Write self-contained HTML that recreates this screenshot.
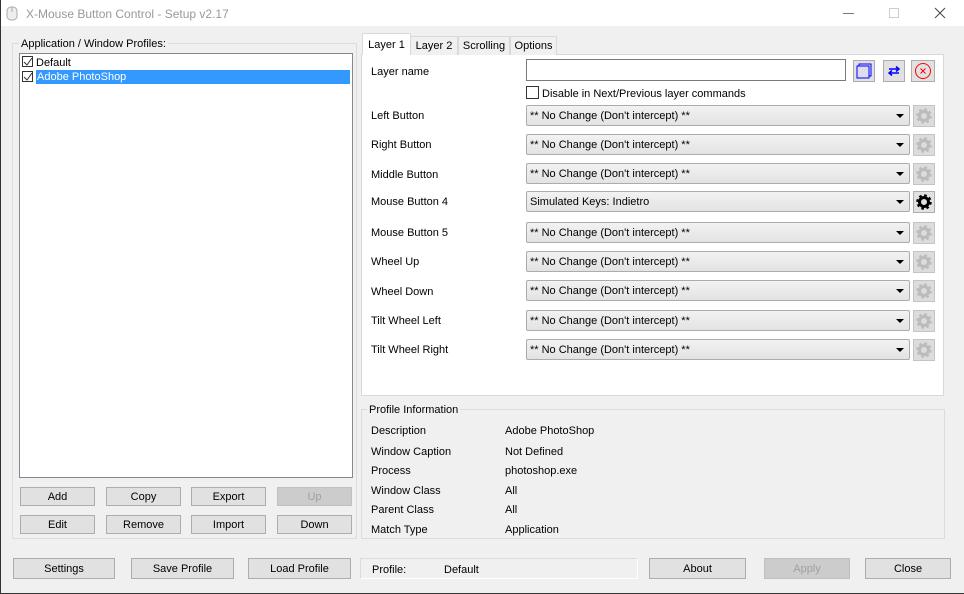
<!DOCTYPE html>
<html><head><meta charset="utf-8"><style>
*{box-sizing:border-box;margin:0;padding:0}
body{width:964px;height:594px;background:#f0f0f0;font-family:"Liberation Sans",sans-serif;font-size:11px;color:#000;position:relative;overflow:hidden}
.a{position:absolute}
.title{left:0;top:0;width:964px;height:26px;background:#fff}
.btn{position:absolute;background:#e1e1e1;border:1px solid #adadad;text-align:center;line-height:18px;font-size:11px}
.dis{background:#cccccc;border-color:#bfbfbf;color:#a0a0a0}
.grp{position:absolute;border:1px solid #dcdcdc}
.lbl{position:absolute;font-size:11px;background:#f0f0f0;padding:0 2px}
.combo{position:absolute;left:526px;width:384px;height:21px;border:1px solid #acacac;border-radius:2px;background:linear-gradient(#f2f2f2,#e3e3e3);padding-left:3px;line-height:20px;font-size:11px}
.combo:after{content:"";position:absolute;right:5px;top:8px;border-left:4px solid transparent;border-right:4px solid transparent;border-top:4px solid #000}
.gear{position:absolute;left:913px;width:22px;height:22px;background:#dcdcdc;border:1px solid #c4c4c4}
.row{position:absolute;left:371px;font-size:11px}
.tab{position:absolute;top:36px;height:19px;border:1px solid #d9d9d9;border-bottom:none;background:#f0f0f0;text-align:center;line-height:19px}
.t{margin-top:1px}
</style></head><body>
<div class="a title"></div>
<div class="a" style="left:0;top:0;width:1px;height:594px;background:#333"></div>
<div class="a" style="left:0;top:593px;width:964px;height:1px;background:#333"></div>
<svg class="a" style="left:6px;top:6px" width="13" height="15"><rect x="1" y="1" width="10" height="13" rx="4" fill="#eee" stroke="#aaa"/><line x1="6" y1="1" x2="6" y2="6" stroke="#aaa"/></svg>
<div class="a" style="left:26px;top:7px;font-size:12px;color:#999">X-Mouse Button Control - Setup v2.17</div>
<div class="a" style="left:843px;top:13px;width:11px;height:1px;background:#777"></div>
<div class="a" style="left:889px;top:8px;width:10px;height:10px;border:1px solid #ccc"></div>
<svg class="a" style="left:934px;top:7px" width="12" height="12"><path d="M1 1L11 11M11 1L1 11" stroke="#444"/></svg>

<div class="grp" style="left:12px;top:43px;width:345px;height:496px"></div>
<div class="lbl" style="left:19px;top:38px">Application / Window Profiles:</div>
<div class="a" style="left:19px;top:53px;width:334px;height:425px;background:#fff;border:1px solid #828790"></div>
<div class="a" style="left:22px;top:56px;width:11px;height:11px;border:1px solid #333;background:#fff"></div>
<svg class="a" style="left:22px;top:56px" width="12" height="12"><path d="M2 6L5 9L10 2" stroke="#333" fill="none"/></svg>
<div class="a" style="left:36px;top:57px">Default</div>
<div class="a" style="left:36px;top:70px;width:314px;height:14px;background:#3399ff"></div>
<div class="a" style="left:22px;top:71px;width:11px;height:11px;border:1px solid #333;background:#fff"></div>
<svg class="a" style="left:22px;top:71px" width="12" height="12"><path d="M2 6L5 9L10 2" stroke="#333" fill="none"/></svg>
<div class="a" style="left:37px;top:71px;color:#fff">Adobe PhotoShop</div>

<div class="btn" style="left:20px;top:487px;width:75px;height:19px">Add</div>
<div class="btn" style="left:106px;top:487px;width:75px;height:19px">Copy</div>
<div class="btn" style="left:191px;top:487px;width:75px;height:19px">Export</div>
<div class="btn dis" style="left:277px;top:487px;width:75px;height:19px">Up</div>
<div class="btn" style="left:20px;top:515px;width:75px;height:19px">Edit</div>
<div class="btn" style="left:106px;top:515px;width:75px;height:19px">Remove</div>
<div class="btn" style="left:191px;top:515px;width:75px;height:19px">Import</div>
<div class="btn" style="left:277px;top:515px;width:75px;height:19px">Down</div>

<div class="a" style="left:361px;top:54px;width:583px;height:342px;background:#fff;border:1px solid #d9d9d9"></div>
<div class="tab" style="left:410px;width:48px">Layer 2</div>
<div class="tab" style="left:458px;width:52px">Scrolling</div>
<div class="tab" style="left:510px;width:47px">Options</div>
<div class="tab" style="left:362px;top:33px;width:49px;height:22px;background:#fff;line-height:22px">Layer 1</div>

<div class="row" style="top:66px">Layer name</div>
<div class="a" style="left:526px;top:59px;width:320px;height:22px;background:#fff;border:1px solid #7a7a7a"></div>
<div class="a" style="left:853px;top:60px;width:22px;height:22px;background:#e1e1e1;border:1px solid #adadad"></div>
<svg class="a" style="left:856px;top:63px" width="16" height="16"><rect x="3" y="1" width="12" height="12" fill="none" stroke="#00f"/><rect x="1" y="3" width="12" height="12" fill="#dde" stroke="#00f"/></svg>
<div class="a" style="left:883px;top:60px;width:22px;height:22px;background:#e1e1e1;border:1px solid #adadad"></div>
<svg class="a" style="left:886px;top:63px" width="16" height="16"><path d="M3 6H13M10 3.5L13 6L10 8.5M13 10H3M6 7.5L3 10L6 12.5" stroke="#00f" stroke-width="1.5" fill="none"/></svg>
<div class="a" style="left:911px;top:60px;width:24px;height:22px;background:#e1e1e1;border:1px solid #adadad"></div>
<svg class="a" style="left:914px;top:62px" width="18" height="18"><circle cx="9" cy="9" r="7.5" fill="none" stroke="#f00"/><path d="M6.5 6.5L11.5 11.5M11.5 6.5L6.5 11.5" stroke="#f00"/></svg>
<div class="a" style="left:526px;top:86px;width:13px;height:13px;border:1px solid #333;background:#fff"></div>
<div class="a" style="left:542px;top:88px">Disable in Next/Previous layer commands</div>

<div class="row" style="top:110px">Left Button</div>
<div class="combo" style="top:105px">** No Change (Don't intercept) **</div><div class="gear" style="top:105px"></div>
<div class="row" style="top:139px">Right Button</div>
<div class="combo" style="top:134px">** No Change (Don't intercept) **</div><div class="gear" style="top:134px"></div>
<div class="row" style="top:169px">Middle Button</div>
<div class="combo" style="top:163px">** No Change (Don't intercept) **</div><div class="gear" style="top:163px"></div>
<div class="row" style="top:196px">Mouse Button 4</div>
<div class="combo" style="top:191px">Simulated Keys: Indietro</div><div class="gear" style="top:191px;background:#e1e1e1;border-color:#adadad"></div>
<div class="row" style="top:227px">Mouse Button 5</div>
<div class="combo" style="top:222px">** No Change (Don't intercept) **</div><div class="gear" style="top:222px"></div>
<div class="row" style="top:256px">Wheel Up</div>
<div class="combo" style="top:251px">** No Change (Don't intercept) **</div><div class="gear" style="top:251px"></div>
<div class="row" style="top:286px">Wheel Down</div>
<div class="combo" style="top:280px">** No Change (Don't intercept) **</div><div class="gear" style="top:280px"></div>
<div class="row" style="top:315px">Tilt Wheel Left</div>
<div class="combo" style="top:310px">** No Change (Don't intercept) **</div><div class="gear" style="top:310px"></div>
<div class="row" style="top:344px">Tilt Wheel Right</div>
<div class="combo" style="top:339px">** No Change (Don't intercept) **</div><div class="gear" style="top:339px"></div>
<svg class="a" style="left:0;top:0" width="964" height="594">
<defs><g id="g"><circle r="4.5" fill="none" stroke-width="3"/><circle r="6.5" fill="none" stroke-width="2.5" stroke-dasharray="2.6 2.5"/></g></defs>
<use href="#g" x="924" y="116" stroke="#bbb"/><use href="#g" x="924" y="145" stroke="#bbb"/><use href="#g" x="924" y="174" stroke="#bbb"/>
<use href="#g" x="924" y="202" stroke="#000"/><use href="#g" x="924" y="233" stroke="#bbb"/><use href="#g" x="924" y="262" stroke="#bbb"/>
<use href="#g" x="924" y="291" stroke="#bbb"/><use href="#g" x="924" y="321" stroke="#bbb"/><use href="#g" x="924" y="350" stroke="#bbb"/>
</svg>

<div class="grp" style="left:361px;top:409px;width:584px;height:130px"></div>
<div class="lbl" style="left:367px;top:404px">Profile Information</div>
<div class="row" style="top:425px">Description</div><div class="a" style="left:505px;top:425px">Adobe PhotoShop</div>
<div class="row" style="top:446px">Window Caption</div><div class="a" style="left:505px;top:446px">Not Defined</div>
<div class="row" style="top:465px">Process</div><div class="a" style="left:505px;top:465px">photoshop.exe</div>
<div class="row" style="top:485px">Window Class</div><div class="a" style="left:505px;top:485px">All</div>
<div class="row" style="top:504px">Parent Class</div><div class="a" style="left:505px;top:504px">All</div>
<div class="row" style="top:524px">Match Type</div><div class="a" style="left:505px;top:524px">Application</div>

<div class="btn" style="left:13px;top:558px;width:102px;height:21px;line-height:21px">Settings</div>
<div class="btn" style="left:131px;top:558px;width:103px;height:21px;line-height:21px">Save Profile</div>
<div class="btn" style="left:248px;top:558px;width:103px;height:21px;line-height:21px">Load Profile</div>
<div class="a" style="left:360px;top:558px;width:278px;height:21px;border:1px solid #dcdcdc;border-right-color:#fff;border-bottom-color:#fff"></div>
<div class="a" style="left:372px;top:564px">Profile:</div><div class="a" style="left:444px;top:564px">Default</div>
<div class="btn" style="left:649px;top:558px;width:97px;height:21px;line-height:21px">About</div>
<div class="btn dis" style="left:764px;top:558px;width:86px;height:21px;line-height:21px">Apply</div>
<div class="btn" style="left:865px;top:558px;width:86px;height:21px;line-height:21px">Close</div>
</body></html>
